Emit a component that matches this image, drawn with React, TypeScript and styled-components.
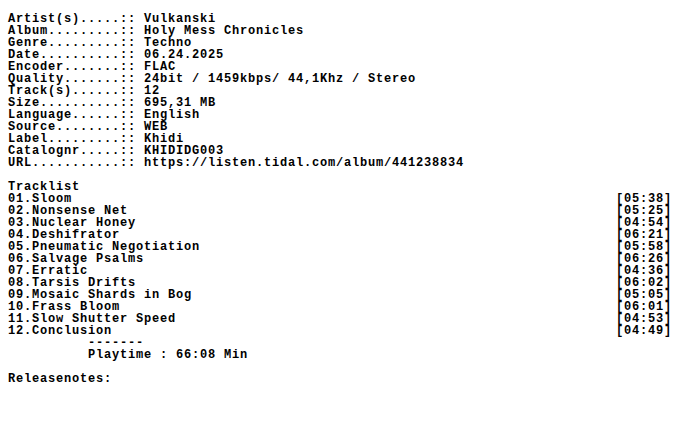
import React from "react";
import styled, { createGlobalStyle } from "styled-components";

const Global = createGlobalStyle`
  html, body { margin: 0; padding: 0; background: #ffffff; }
`;

const Page = styled.div`
  padding: 13px 8px 0 8px;
  background: #ffffff;
  min-height: 444px;
  box-sizing: border-box;
`;

const Nfo = styled.pre`
  margin: 0;
  font-family: "Liberation Mono", "DejaVu Sans Mono", monospace;
  font-weight: 700;
  font-size: 12px;
  letter-spacing: 0.8px;
  line-height: 12px;
  color: #000000;
  white-space: pre;
`;

const info: [string, string][] = [
  ["Artist(s).....", "Vulkanski"],
  ["Album.........", "Holy Mess Chronicles"],
  ["Genre.........", "Techno"],
  ["Date..........", "06.24.2025"],
  ["Encoder.......", "FLAC"],
  ["Quality.......", "24bit / 1459kbps/ 44,1Khz / Stereo"],
  ["Track(s)......", "12"],
  ["Size..........", "695,31 MB"],
  ["Language......", "English"],
  ["Source........", "WEB"],
  ["Label.........", "Khidi"],
  ["Catalognr.....", "KHIDIDG003"],
  ["URL...........", "https://listen.tidal.com/album/441238834"],
];

const tracks: [string, string][] = [
  ["01.Sloom", "05:38"],
  ["02.Nonsense Net", "05:25"],
  ["03.Nuclear Honey", "04:54"],
  ["04.Deshifrator", "06:21"],
  ["05.Pneumatic Negotiation", "05:58"],
  ["06.Salvage Psalms", "06:26"],
  ["07.Erratic", "04:36"],
  ["08.Tarsis Drifts", "06:02"],
  ["09.Mosaic Shards in Bog", "05:05"],
  ["10.Frass Bloom", "06:01"],
  ["11.Slow Shutter Speed", "04:53"],
  ["12.Conclusion", "04:49"],
];

export default function App() {
  const lines: string[] = [];
  info.forEach(([k, v]) => lines.push(`${k}:: ${v}`));
  lines.push("");
  lines.push("Tracklist");
  tracks.forEach(([t, d]) => lines.push(t.padEnd(76, " ") + `[${d}]`));
  lines.push("          -------");
  lines.push("          Playtime : 66:08 Min");
  lines.push("");
  lines.push("Releasenotes:");
  return (
    <Page>
      <Global />
      <Nfo>{lines.join("\n")}</Nfo>
    </Page>
  );
}
